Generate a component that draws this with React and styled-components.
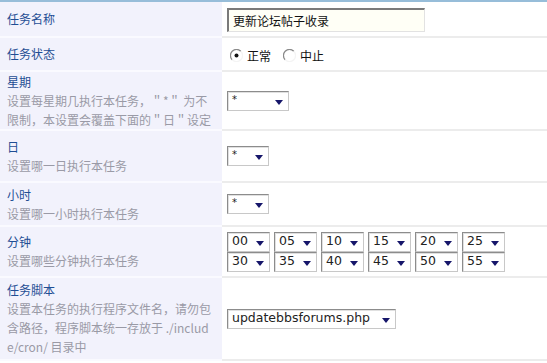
import styled, { createGlobalStyle } from 'styled-components';

const GlobalStyle = createGlobalStyle`
  body {
    margin: 0;
    background: #ffffff;
    font-family: "Noto Sans CJK SC", "DejaVu Sans", sans-serif;
    font-size: 12px;
  }
`;

const Table = styled.div`
  width: 547px;
  border-top: 2px solid #97bdd9;
`;

const Row = styled.div`
  display: grid;
  grid-template-columns: 222px 1fr;
  height: ${(p) => p.$h}px;
`;

const Label = styled.div`
  display: flex;
  flex-direction: column;
  justify-content: center;
  padding: 0 10px 0 7px;
  background: #f2f2fc;
  border-bottom: 2px solid #fafaff;
`;

const Title = styled.div`
  color: #1f4e94;
  font-size: 12px;
  line-height: 18px;
`;

const Desc = styled.div`
  color: #9a9aa6;
  font-size: 12px;
  line-height: 19px;
  word-break: break-all;
`;

const Field = styled.div`
  display: flex;
  justify-content: flex-start;
  align-items: center;
  padding-left: 5px;
  border-bottom: 2px solid #ececec;
`;

const TextInput = styled.div`
  box-sizing: border-box;
  width: 198px;
  height: 24px;
  margin-top: 1px;
  padding: 2px 0 0 4px;
  background: #fffff6;
  border-top: 2px solid #7a7a7a;
  border-left: 2px solid #7a7a7a;
  border-right: 1px solid #e2e2e2;
  border-bottom: 1px solid #e2e2e2;
  color: #111;
  font-size: 12px;
  line-height: 17px;
`;

const RadioGroup = styled.div`
  display: flex;
  align-items: center;
  margin: 2px 0 0 3px;
`;

const RadioLabel = styled.label`
  display: flex;
  align-items: center;
  gap: 4px;
  margin-right: 12px;
  color: #111;
  font-size: 12px;
`;

const SelectBox = styled.div`
  box-sizing: border-box;
  display: flex;
  align-items: center;
  justify-content: space-between;
  width: ${(p) => p.$w}px;
  height: 20px;
  padding: 0 5px 0 4px;
  background: #fff;
  border-top: 1px solid #8c8c8c;
  border-left: 1px solid #8c8c8c;
  border-right: 1px solid #c8c8c8;
  border-bottom: 1px solid #c8c8c8;
  box-shadow: inset 1px 1px 0 #e0e0e0;
  font-family: "DejaVu Sans", sans-serif;
  font-size: ${(p) => (p.$small ? 10 : 12.5)}px;
  color: #222;
`;

const SelectText = styled.span`
  line-height: 1;
  align-self: ${(p) => (p.$top ? 'flex-start' : 'center')};
  margin-top: ${(p) => (p.$top ? 3 : 0)}px;
`;

const MinuteGrid = styled.div`
  display: grid;
  grid-template-columns: repeat(6, 43px);
  column-gap: 4px;
`;

const Arrow = () => (
  <svg width="8" height="5" viewBox="0 0 8 5" style={{ marginTop: 3 }}>
    <path d="M0 0 H8 L4 5 Z" fill="#16166a" />
  </svg>
);

const Radio = ({ checked }) => (
  <svg width="13" height="13" viewBox="0 0 13 13">
    <path d="M2.2 10.8 A6 6 0 0 1 10.8 2.2" fill="none" stroke="#8a8a8a" strokeWidth="1.3" />
    <path d="M10.8 2.2 A6 6 0 0 1 2.2 10.8" fill="none" stroke="#f4f4f4" strokeWidth="1.3" />
    <circle cx="6.5" cy="6.5" r="4.6" fill="#ffffff" />
    {checked && <circle cx="6.5" cy="6.5" r="2" fill="#111" />}
  </svg>
);

function Select({ value, width, small }) {
  return (
    <SelectBox $w={width} $small={small}>
      <SelectText $top={small}>{value}</SelectText>
      <Arrow />
    </SelectBox>
  );
}

const minutes = ['00', '05', '10', '15', '20', '25', '30', '35', '40', '45', '50', '55'];

export default function App() {
  return (
    <>
      <GlobalStyle />
      <Table>
        <Row $h={36}>
          <Label>
            <Title>任务名称</Title>
          </Label>
          <Field>
            <TextInput>更新论坛帖子收录</TextInput>
          </Field>
        </Row>
        <Row $h={34}>
          <Label>
            <Title>任务状态</Title>
          </Label>
          <Field>
            <RadioGroup>
              <RadioLabel>
                <Radio checked />
                正常
              </RadioLabel>
              <RadioLabel>
                <Radio />
                中止
              </RadioLabel>
            </RadioGroup>
          </Field>
        </Row>
        <Row $h={59}>
          <Label>
            <Title>星期</Title>
            <Desc>设置每星期几执行本任务，＂*＂ 为不限制，本设置会覆盖下面的＂日＂设定</Desc>
          </Label>
          <Field>
            <Select value="*" width={62} small />
          </Field>
        </Row>
        <Row $h={52}>
          <Label>
            <Title>日</Title>
            <Desc>设置哪一日执行本任务</Desc>
          </Label>
          <Field>
            <Select value="*" width={42} small />
          </Field>
        </Row>
        <Row $h={44}>
          <Label>
            <Title>小时</Title>
            <Desc>设置哪一小时执行本任务</Desc>
          </Label>
          <Field>
            <Select value="*" width={42} small />
          </Field>
        </Row>
        <Row $h={51}>
          <Label>
            <Title>分钟</Title>
            <Desc>设置哪些分钟执行本任务</Desc>
          </Label>
          <Field>
            <MinuteGrid>
              {minutes.map((m) => (
                <Select key={m} value={m} width={43} />
              ))}
            </MinuteGrid>
          </Field>
        </Row>
        <Row $h={83}>
          <Label>
            <Title>任务脚本</Title>
            <Desc>设置本任务的执行程序文件名，请勿包含路径，程序脚本统一存放于 ./include/cron/ 目录中</Desc>
          </Label>
          <Field>
            <Select value="updatebbsforums.php" width={169} />
          </Field>
        </Row>
      </Table>
    </>
  );
}
